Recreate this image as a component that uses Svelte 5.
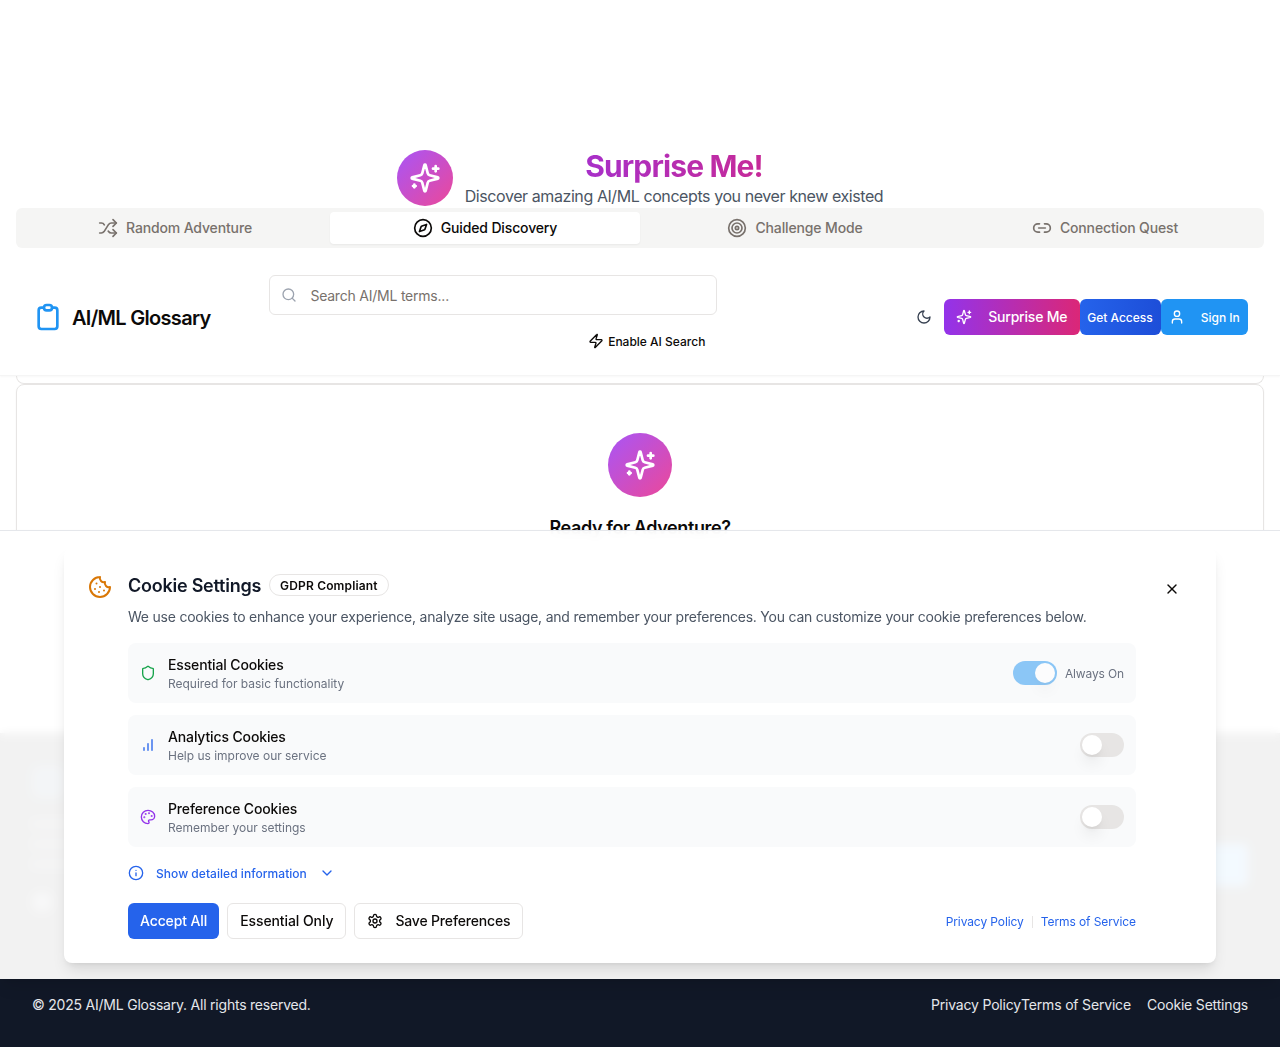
<script>
  const icons = {
    sparkles: '<path d="M9.937 15.5A2 2 0 0 0 8.5 14.063l-6.135-1.582a.5.5 0 0 1 0-.962L8.5 9.936A2 2 0 0 0 9.937 8.5l1.582-6.135a.5.5 0 0 1 .963 0L14.063 8.5A2 2 0 0 0 15.5 9.937l6.135 1.581a.5.5 0 0 1 0 .964L15.5 14.063a2 2 0 0 0-1.437 1.437l-1.582 6.135a.5.5 0 0 1-.963 0z"/><path d="M20 3v4"/><path d="M22 5h-4"/><path d="M4 17v2"/><path d="M5 18H3"/>',
    shuffle: '<path d="m18 14 4 4-4 4"/><path d="m18 2 4 4-4 4"/><path d="M2 18h1.973a4 4 0 0 0 3.3-1.7l5.454-8.6a4 4 0 0 1 3.3-1.7H22"/><path d="M2 6h1.972a4 4 0 0 1 3.6 2.2"/><path d="M22 18h-6.041a4 4 0 0 1-3.3-1.8l-.359-.45"/>',
    compass: '<path d="m16.24 7.76-1.804 5.411a2 2 0 0 1-1.265 1.265L7.76 16.24l1.804-5.411a2 2 0 0 1 1.265-1.265z"/><circle cx="12" cy="12" r="10"/>',
    target: '<circle cx="12" cy="12" r="10"/><circle cx="12" cy="12" r="6"/><circle cx="12" cy="12" r="2"/>',
    link: '<path d="M9 17H7A5 5 0 0 1 7 7h2"/><path d="M15 7h2a5 5 0 1 1 0 10h-2"/><path d="M8 12h8"/>',
    clipboard: '<path d="M9 5H7a2 2 0 0 0-2 2v12a2 2 0 0 0 2 2h10a2 2 0 0 0 2-2V7a2 2 0 0 0-2-2h-2M9 5a2 2 0 0 0 2 2h2a2 2 0 0 0 2-2M9 5a2 2 0 0 1 2-2h2a2 2 0 0 1 2 2"/>',
    search: '<circle cx="11" cy="11" r="8"/><path d="m21 21-4.3-4.3"/>',
    zap: '<path d="M4 14a1 1 0 0 1-.78-1.63l9.9-10.2a.5.5 0 0 1 .86.46l-1.92 6.02A1 1 0 0 0 13 10h7a1 1 0 0 1 .78 1.63l-9.9 10.2a.5.5 0 0 1-.86-.46l1.92-6.02A1 1 0 0 0 11 14z"/>',
    moon: '<path d="M12 3a6 6 0 0 0 9 9 9 9 0 1 1-9-9Z"/>',
    user: '<path d="M19 21v-2a4 4 0 0 0-4-4H9a4 4 0 0 0-4 4v2"/><circle cx="12" cy="7" r="4"/>',
    cookie: '<path d="M12 2a10 10 0 1 0 10 10 4 4 0 0 1-5-5 4 4 0 0 1-5-5"/><path d="M8.5 8.5v.01"/><path d="M16 15.5v.01"/><path d="M12 12v.01"/><path d="M11 17v.01"/><path d="M7 14v.01"/>',
    close: '<path d="M18 6 6 18"/><path d="m6 6 12 12"/>',
    shield: '<path d="M20 13c0 5-3.5 7.5-7.66 8.95a1 1 0 0 1-.67-.01C7.5 20.5 4 18 4 13V6a1 1 0 0 1 1-1c2 0 4.5-1.2 6.24-2.72a1.17 1.17 0 0 1 1.52 0C14.51 3.81 17 5 19 5a1 1 0 0 1 1 1z"/>',
    bars: '<path d="M12 20V10"/><path d="M18 20V4"/><path d="M6 20v-4"/>',
    palette: '<circle cx="13.5" cy="6.5" r=".5" fill="currentColor"/><circle cx="17.5" cy="10.5" r=".5" fill="currentColor"/><circle cx="8.5" cy="7.5" r=".5" fill="currentColor"/><circle cx="6.5" cy="12.5" r=".5" fill="currentColor"/><path d="M12 2C6.5 2 2 6.5 2 12s4.5 10 10 10c.926 0 1.648-.746 1.648-1.688 0-.437-.18-.835-.437-1.125-.29-.289-.438-.652-.438-1.125a1.64 1.64 0 0 1 1.668-1.668h1.996c3.051 0 5.555-2.503 5.555-5.554C21.965 6.012 17.461 2 12 2z"/>',
    info: '<circle cx="12" cy="12" r="10"/><path d="M12 16v-4"/><path d="M12 8h.01"/>',
    chevron: '<path d="m6 9 6 6 6-6"/>',
    settings: '<path d="M12.22 2h-.44a2 2 0 0 0-2 2v.18a2 2 0 0 1-1 1.73l-.43.25a2 2 0 0 1-2 0l-.15-.08a2 2 0 0 0-2.73.73l-.22.38a2 2 0 0 0 .73 2.73l.15.1a2 2 0 0 1 1 1.72v.51a2 2 0 0 1-1 1.74l-.15.09a2 2 0 0 0-.73 2.73l.22.38a2 2 0 0 0 2.73.73l.15-.08a2 2 0 0 1 2 0l.43.25a2 2 0 0 1 1 1.73V20a2 2 0 0 0 2 2h.44a2 2 0 0 0 2-2v-.18a2 2 0 0 1 1-1.73l.43-.25a2 2 0 0 1 2 0l.15.08a2 2 0 0 0 2.73-.73l.22-.39a2 2 0 0 0-.73-2.73l-.15-.08a2 2 0 0 1-1-1.74v-.5a2 2 0 0 1 1-1.74l.15-.09a2 2 0 0 0 .73-2.73l-.22-.38a2 2 0 0 0-2.73-.73l-.15.08a2 2 0 0 1-2 0l-.43-.25a2 2 0 0 1-1-1.73V4a2 2 0 0 0-2-2z"/><circle cx="12" cy="12" r="3"/>'
  };

  const tabs = [
    { icon: 'shuffle', label: 'Random Adventure' },
    { icon: 'compass', label: 'Guided Discovery' },
    { icon: 'target', label: 'Challenge Mode' },
    { icon: 'link', label: 'Connection Quest' }
  ];
  let activeTab = $state('Guided Discovery');

  let categories = $state([
    { icon: 'shield', tone: 'green', title: 'Essential Cookies', note: 'Required for basic functionality', on: true, locked: true },
    { icon: 'bars', tone: 'blue', title: 'Analytics Cookies', note: 'Help us improve our service', on: false, locked: false },
    { icon: 'palette', tone: 'purple', title: 'Preference Cookies', note: 'Remember your settings', on: false, locked: false }
  ]);
</script>

{#snippet icon(name, size = 16)}
  <svg width={size} height={size} viewBox="0 0 24 24" fill="none" stroke="currentColor" stroke-width="2" stroke-linecap="round" stroke-linejoin="round" aria-hidden="true">{@html icons[name]}</svg>
{/snippet}

<div class="page">
  <section class="hero">
    <div class="orb">{@render icon('sparkles', 32)}</div>
    <div class="hero-text">
      <h1>Surprise Me!</h1>
      <p>Discover amazing AI/ML concepts you never knew existed</p>
    </div>
  </section>

  <div class="tabs">
    {#each tabs as tab}
      <button class="tab" class:active={tab.label === activeTab} onclick={() => (activeTab = tab.label)}>
        {@render icon(tab.icon, 20)}{tab.label}
      </button>
    {/each}
  </div>

  <header class="nav">
    <div class="brand">{@render icon('clipboard', 32)}<span>AI/ML Glossary</span></div>
    <div class="search">
      <div class="field">{@render icon('search')}<input placeholder="Search AI/ML terms..." /></div>
      <button class="ai">{@render icon('zap')}Enable AI Search</button>
    </div>
    <div class="actions">
      <button class="theme" aria-label="Toggle theme">{@render icon('moon')}</button>
      <button class="act surprise">{@render icon('sparkles')}Surprise Me</button>
      <button class="act access">Get Access</button>
      <button class="act sign">{@render icon('user')}Sign In</button>
    </div>
  </header>

  <div class="card-end"></div>
  <section class="card">
    <div class="orb large">{@render icon('sparkles', 32)}</div>
    <h3>Ready for Adventure?</h3>
  </section>

  <footer>
    <div class="foot-main">
      <div class="foot-about">
        <div class="foot-logo"></div>
        <i></i><i></i><i></i>
        <b></b>
      </div>
      <div class="foot-button"></div>
    </div>
    <div class="foot-bottom">
      <span>© 2025 AI/ML Glossary. All rights reserved.</span>
      <nav><a href="#privacy">Privacy Policy</a><a href="#terms">Terms of Service</a><a class="spaced" href="#cookies">Cookie Settings</a></nav>
    </div>
  </footer>

  <div class="sheet">
    <div class="consent">
      <div class="cookie-icon">{@render icon('cookie', 24)}</div>
      <div class="body">
        <div class="title"><h2>Cookie Settings</h2><span class="badge">GDPR Compliant</span></div>
        <p class="desc">We use cookies to enhance your experience, analyze site usage, and remember your preferences. You can customize your cookie preferences below.</p>
        <div class="rows">
          {#each categories as c}
            <div class="row">
              <span class="tone {c.tone}">{@render icon(c.icon)}</span>
              <div class="label"><strong>{c.title}</strong><small>{c.note}</small></div>
              <button class="switch" class:on={c.on} disabled={c.locked} aria-label={c.title} onclick={() => (c.on = !c.on)}><span></span></button>
              {#if c.locked}<small class="always">Always On</small>{/if}
            </div>
          {/each}
        </div>
        <button class="details">{@render icon('info')}<span>Show detailed information</span>{@render icon('chevron')}</button>
        <div class="bottom">
          <button class="btn primary">Accept All</button>
          <button class="btn">Essential Only</button>
          <button class="btn save">{@render icon('settings')}Save Preferences</button>
          <div class="links"><a href="#privacy">Privacy Policy</a><span class="sep"></span><a href="#terms">Terms of Service</a></div>
        </div>
      </div>
      <button class="close" aria-label="Close">{@render icon('close')}</button>
    </div>
  </div>
</div>

<style>
  :global(body) { margin: 0; background: #fff; }
  .page, .page * { box-sizing: border-box; }
  .page {
    position: relative; height: 1047px; overflow: hidden; display: flex; flex-direction: column;
    font-family: Inter, sans-serif; color: #0c0a09; background: #fff;
  }
  h1, h2, h3, p { margin: 0; }
  svg { display: block; flex: none; }
  button { font-family: inherit; color: inherit; border: 0; background: none; padding: 0; margin: 0; }
  a { color: inherit; text-decoration: none; }

  .hero { display: flex; justify-content: center; align-items: center; gap: 12px; padding-top: 148px; }
  .orb {
    width: 56px; height: 56px; border-radius: 50%; display: grid; place-items: center;
    color: #fff; background: linear-gradient(to bottom right, #a855f7, #ec4899);
  }
  .orb.large { width: 64px; height: 64px; }
  .hero-text { text-align: center; }
  h1 {
    font-size: 30px; line-height: 36px; font-weight: 700; letter-spacing: -.87px; color: transparent;
    background: linear-gradient(to right, #9333ea, #db2777); background-clip: text; -webkit-background-clip: text;
  }
  .hero-text p { font-size: 16px; line-height: 24px; letter-spacing: -.42px; color: #4b5563; }

  .tabs {
    margin: 0 16px; height: 40px; padding: 4px; border-radius: 6px; background: #f5f5f4;
    display: grid; grid-template-columns: repeat(4, 1fr); flex: none;
  }
  .tab {
    display: flex; align-items: center; justify-content: center; gap: 8px; border-radius: 4px;
    font-size: 14px; line-height: 20px; font-weight: 500; letter-spacing: -.14px; color: #78716c;
  }
  .tab.active { background: #fff; color: #0c0a09; box-shadow: 0 1px 2px rgba(0, 0, 0, .05); }

  .nav {
    height: 128px; flex: none; padding: 11px 32px 0; display: flex; align-items: center; justify-content: space-between;
    border-bottom: 1px solid #f5f5f5; box-shadow: 0 1px 2px rgba(0, 0, 0, .03); background: #fff; z-index: 1;
  }
  .brand { display: flex; align-items: center; gap: 8px; width: 237.4px; color: #2094f3; }
  .brand span { padding-top: 2px; font-size: 20px; line-height: 28px; font-weight: 600; letter-spacing: -.7px; color: #0c0a09; }
  .search { width: 448px; align-self: flex-start; padding-top: 16px; display: flex; flex-direction: column; align-items: flex-end; }
  .field {
    width: 100%; height: 40px; border: 1px solid #e7e5e4; border-radius: 6px; display: flex; align-items: center;
    gap: 13px; padding-left: 11px; color: #9ca3af;
  }
  .field input { border: 0; outline: 0; padding: 2px 0 0; flex: 1; font: 14px/20px Inter, sans-serif; letter-spacing: -.22px; background: none; }
  .field input::placeholder { color: #78716c; opacity: 1; }
  .ai { height: 36px; margin-top: 8px; padding: 0 12px; display: flex; align-items: center; gap: 4px; font-size: 12px; font-weight: 500; }
  .actions { flex: 1; display: flex; align-items: center; justify-content: flex-end; }
  .theme { padding: 0 12px; color: #374151; }
  .act { height: 36px; border-radius: 6px; display: flex; align-items: center; justify-content: center; color: #fff; font-weight: 500; }
  .surprise { width: 135.5px; gap: 16px; padding-bottom: 1px; font-size: 14px; letter-spacing: -.2px; background: linear-gradient(to right, #9333ea, #db2777); }
  .access { width: 81px; font-size: 12px; background: linear-gradient(to right, #2563eb, #1d4ed8); }
  .sign { width: 87.5px; gap: 16px; font-size: 12px; background: #2094f3; }

  .card-end { height: 8px; flex: none; margin: 0 16px; border: 1px solid #e7e5e4; border-top: 0; border-radius: 0 0 8px 8px; }
  .card {
    height: 303px; flex: none; margin: 0 16px; border: 1px solid #e7e5e4; border-radius: 8px; padding-top: 48px;
    display: flex; flex-direction: column; align-items: center; gap: 17px; box-shadow: 0 1px 2px rgba(0, 0, 0, .05);
  }
  h3 { font-size: 18px; line-height: 28px; font-weight: 600; letter-spacing: -.4px; }

  footer { margin-top: 46px; flex: 1; background: #111827; color: #e5e7eb; }
  .foot-main { height: 246px; padding: 33px 32px 0; display: flex; justify-content: space-between; align-items: flex-start; background: #0d0d0d; }
  .foot-about { display: flex; flex-direction: column; }
  .foot-logo { width: 32px; height: 32px; margin-bottom: 22px; border-radius: 8px; background: #1b4668; }
  .foot-about i { width: 260px; height: 8px; margin-bottom: 12px; background: #3f4550; }
  .foot-about b { width: 20px; height: 20px; margin-top: 12px; border-radius: 50%; background: #6b7280; }
  .foot-button { width: 48px; height: 42px; margin-top: 78px; border-radius: 6px; background: #2094f3; }
  .foot-bottom { padding: 16px 32px 0; display: flex; justify-content: space-between; font-size: 14px; line-height: 20px; letter-spacing: -.22px; }
  .foot-bottom nav { display: flex; letter-spacing: -.18px; }
  .spaced { margin-left: 16px; }

  /* Consent sheet floats over the page content */
  .sheet {
    position: absolute; left: 0; right: 0; top: 530px; height: 449px; z-index: 2; padding: 16px 64px;
    border-top: 1px solid #e5e7eb; background: rgba(255, 255, 255, .95); backdrop-filter: blur(5px);
    box-shadow: 0 10px 15px -3px rgba(0, 0, 0, .1), 0 4px 6px -4px rgba(0, 0, 0, .1);
  }
  .consent {
    height: 416px; padding: 24px; display: flex; align-items: flex-start; gap: 16px; border-radius: 8px; background: #fff;
    box-shadow: 0 10px 15px -3px rgba(0, 0, 0, .1), 0 4px 6px -4px rgba(0, 0, 0, .1);
  }
  .cookie-icon { color: #d97706; padding-top: 4px; }
  .body { flex: 1; }
  .title { display: flex; align-items: center; gap: 8px; height: 28px; }
  h2 { padding-top: 2px; font-size: 18px; line-height: 28px; font-weight: 600; letter-spacing: -.24px; color: #111827; }
  .badge { height: 22px; padding: 2px 10px; border: 1px solid #e7e5e4; border-radius: 11px; font-size: 12px; line-height: 18px; font-weight: 600; letter-spacing: .16px; }
  .desc { margin-top: 8px; font-size: 14px; line-height: 20px; letter-spacing: -.223px; color: #4b5563; white-space: nowrap; }
  .rows { margin-top: 16px; display: grid; gap: 12px; }
  .row { height: 60px; padding: 12px; display: flex; align-items: center; border-radius: 8px; background: #f9fafb; }
  .green { color: #16a34a; }
  .blue { color: #2563eb; }
  .purple { color: #9333ea; }
  .label { flex: 1; margin-left: 12px; display: flex; flex-direction: column; }
  .label strong { font-size: 14px; line-height: 20px; font-weight: 500; letter-spacing: -.14px; }
  small { height: 16px; padding-top: 1px; font-size: 12px; line-height: 16px; letter-spacing: -.02px; color: #6b7280; }
  .always { margin-left: 8px; letter-spacing: -.13px; }
  .switch { width: 44px; height: 24px; padding: 2px; border-radius: 12px; background: #e7e5e4; display: flex; }
  .switch.on { background: #2094f3; justify-content: flex-end; }
  .switch:disabled { opacity: .5; }
  .switch span { width: 20px; height: 20px; border-radius: 50%; background: #fff; box-shadow: 0 10px 15px -3px rgba(0, 0, 0, .1), 0 4px 6px -4px rgba(0, 0, 0, .1); }
  .details { margin-top: 16px; height: 20px; display: flex; align-items: center; gap: 12px; color: #2563eb; font-size: 12px; font-weight: 500; letter-spacing: .04px; }
  .bottom { margin-top: 20px; display: flex; align-items: center; gap: 8px; }
  .btn { height: 36px; padding: 0 12px 1px; border: 1px solid #e7e5e4; border-radius: 6px; font-size: 14px; font-weight: 500; letter-spacing: -.09px; }
  .primary { border: 0; background: #2563eb; color: #fff; letter-spacing: -.12px; }
  .save { padding-bottom: 1px; display: flex; align-items: center; gap: 12px; letter-spacing: -.17px; }
  .links { margin-left: auto; padding-top: 1px; display: flex; align-items: center; gap: 8px; color: #2563eb; font-size: 12px; line-height: 16px; letter-spacing: -.09px; }
  .sep { width: 1px; height: 12px; background: #e7e5e4; }
  .close { width: 40px; height: 36px; display: grid; place-items: center; }
</style>
